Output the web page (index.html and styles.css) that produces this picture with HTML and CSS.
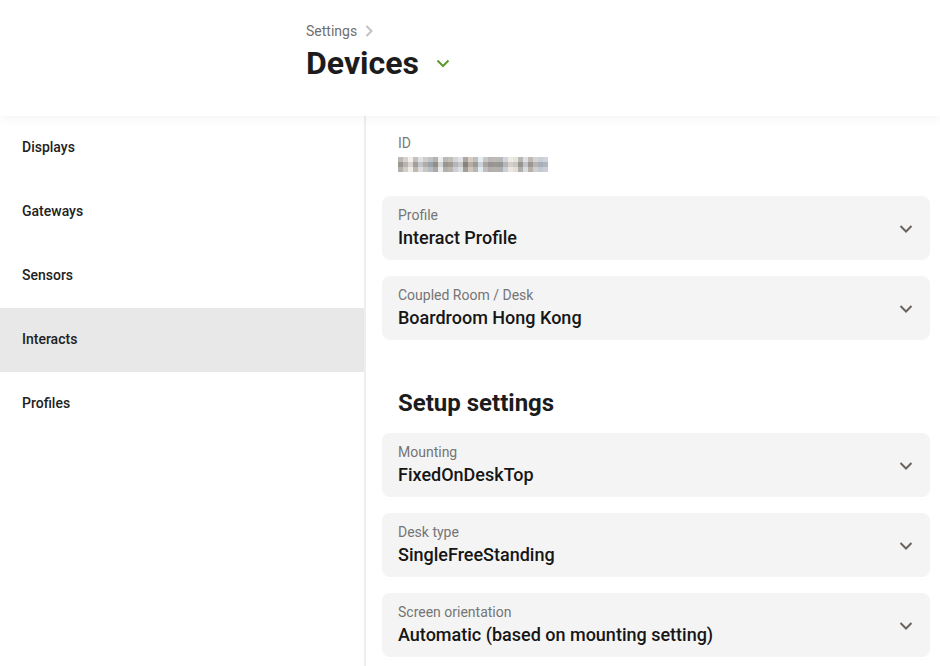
FILE: index.html
```html
<!DOCTYPE html>
<html lang="en">
<head>
<meta charset="utf-8">
<title>Devices</title>
<link rel="stylesheet" href="styles.css">
</head>
<body>
<header class="header">
  <div class="header-inner">
    <div class="breadcrumb">
      <span>Settings</span>
      <svg class="crumb-chev" width="10" height="14" viewBox="0 0 10 14"><path d="M2.5 2 L7.5 7 L2.5 12" fill="none" stroke="#c2c2c2" stroke-width="2"/></svg>
    </div>
    <div class="title-row">
      <h1 class="title">Devices</h1>
      <svg class="title-caret" width="14" height="10" viewBox="0 0 14 10"><path d="M1.5 2.5 L7 8 L12.5 2.5" fill="none" stroke="#5c9a2e" stroke-width="2"/></svg>
    </div>
  </div>
</header>
<div class="main">
  <nav class="sidebar">
    <div class="nav-item">Displays</div>
    <div class="nav-item">Gateways</div>
    <div class="nav-item">Sensors</div>
    <div class="nav-item active">Interacts</div>
    <div class="nav-item">Profiles</div>
  </nav>
  <section class="content">
    <div class="id-block">
      <div class="id-label">ID</div>
      <div class="id-value" aria-label="hidden id"></div>
    </div>
    <div class="cards">
      <div class="card">
        <div class="card-text">
          <div class="card-label">Profile</div>
          <div class="card-value">Interact Profile</div>
        </div>
        <svg class="caret" width="14" height="10" viewBox="0 0 14 10"><path d="M1.5 2 L7 7.5 L12.5 2" fill="none" stroke="#6a625c" stroke-width="2"/></svg>
      </div>
      <div class="card">
        <div class="card-text">
          <div class="card-label">Coupled Room / Desk</div>
          <div class="card-value">Boardroom Hong Kong</div>
        </div>
        <svg class="caret" width="14" height="10" viewBox="0 0 14 10"><path d="M1.5 2 L7 7.5 L12.5 2" fill="none" stroke="#6a625c" stroke-width="2"/></svg>
      </div>
    </div>
    <h2 class="section-title">Setup settings</h2>
    <div class="cards">
      <div class="card">
        <div class="card-text">
          <div class="card-label">Mounting</div>
          <div class="card-value">FixedOnDeskTop</div>
        </div>
        <svg class="caret" width="14" height="10" viewBox="0 0 14 10"><path d="M1.5 2 L7 7.5 L12.5 2" fill="none" stroke="#6a625c" stroke-width="2"/></svg>
      </div>
      <div class="card">
        <div class="card-text">
          <div class="card-label">Desk type</div>
          <div class="card-value">SingleFreeStanding</div>
        </div>
        <svg class="caret" width="14" height="10" viewBox="0 0 14 10"><path d="M1.5 2 L7 7.5 L12.5 2" fill="none" stroke="#6a625c" stroke-width="2"/></svg>
      </div>
      <div class="card">
        <div class="card-text">
          <div class="card-label">Screen orientation</div>
          <div class="card-value">Automatic (based on mounting setting)</div>
        </div>
        <svg class="caret" width="14" height="10" viewBox="0 0 14 10"><path d="M1.5 2 L7 7.5 L12.5 2" fill="none" stroke="#6a625c" stroke-width="2"/></svg>
      </div>
    </div>
  </section>
</div>
</body>
</html>
```
FILE: styles.css
```css
* { box-sizing: border-box; }
html, body { margin: 0; padding: 0; }
body {
  font-family: Roboto, "Noto Sans", "Liberation Sans", sans-serif;
  color: #1c1c1c;
  background: #fff;
  width: 940px;
  height: 666px;
  overflow: hidden;
}
.header {
  height: 116px;
  background: #fff;
  position: relative;
  z-index: 2;
  box-shadow: 0 3px 10px rgba(0, 0, 0, 0.045);
}
.header-inner {
  padding: 21px 0 0 306px;
}
.breadcrumb {
  display: flex;
  align-items: center;
  gap: 7px;
  font-size: 14px;
  line-height: 20px;
  color: #6f6f6f;
}
.crumb-chev { display: block; }
.title-row {
  display: flex;
  align-items: center;
  gap: 17px;
  margin-top: 6px;
}
.title {
  margin: 0;
  font-size: 32px;
  line-height: 32px;
  font-weight: 700;
  color: #1c1c1c;
}
.title-caret { display: block; margin-top: 0; }
.main {
  display: flex;
  height: 550px;
}
.sidebar {
  width: 366px;
  flex: none;
  border-right: 2px solid #eeeeee;
}
.nav-item {
  height: 64px;
  display: flex;
  align-items: center;
  padding: 0 0 2px 22px;
  font-size: 14px;
  font-weight: 500;
  color: #222;
}
.nav-item.active { background: #e8e8e8; }
.content {
  flex: 1;
  padding: 17px 10px 0 16px;
}
.id-block { padding-left: 16px; }
.id-label {
  font-size: 14px;
  line-height: 20px;
  color: #7a7a7a;
}
.id-value {
  margin-top: 4px;
  width: 150px;
  height: 15px;
  background:
    linear-gradient(180deg, rgba(255,255,255,0.25) 0 5px, rgba(60,60,60,0.12) 5px 10px, rgba(255,255,255,0.15) 10px 15px),
    linear-gradient(90deg,
      #a7a39c 0 5px, #c9c4be 5px 10px, #efeae2 10px 15px, #b3aca6 15px 20px, #d6d8dc 20px 25px,
      #c1bcb6 25px 30px, #a7b1ba 30px 35px, #9e9a94 35px 40px, #e6e8ea 40px 45px, #a6a19b 45px 50px,
      #b0a9a2 50px 55px, #c2c7ce 55px 60px, #d9d9d9 60px 65px, #8f8c88 65px 70px, #c8bdb0 70px 75px,
      #a9aaa4 75px 80px, #dfe6ee 80px 85px, #b9b3ad 85px 90px, #a59fa4 90px 95px, #a7a49b 95px 100px,
      #9fa3a2 100px 105px, #c3c8cc 105px 110px, #e9e4dc 110px 115px, #ddd9d4 115px 120px, #a2a09c 120px 125px,
      #d3d6da 125px 130px, #aaa39c 130px 135px, #c9c6c2 135px 140px, #b6bfcc 140px 145px, #c0c6d0 145px 150px);
}
.cards {
  display: flex;
  flex-direction: column;
  gap: 16px;
}
.id-block + .cards { margin-top: 24px; }
.card {
  height: 64px;
  background: #f4f4f4;
  border-radius: 8px;
  display: flex;
  align-items: center;
  justify-content: space-between;
  padding: 0 16px 0 16px;
}
.card-text { padding-top: 1px; }
.card-label {
  font-size: 14px;
  line-height: 18px;
  color: #757575;
}
.card-value {
  font-size: 18px;
  line-height: 26px;
  padding-top: 1px;
  font-weight: 500;
  color: #161616;
}
.caret { display: block; margin-right: 1px; margin-top: 1px; }
.section-title {
  margin: 47px 0 14px 16px;
  font-size: 24px;
  line-height: 32px;
  font-weight: 700;
  color: #1c1c1c;
}
```
